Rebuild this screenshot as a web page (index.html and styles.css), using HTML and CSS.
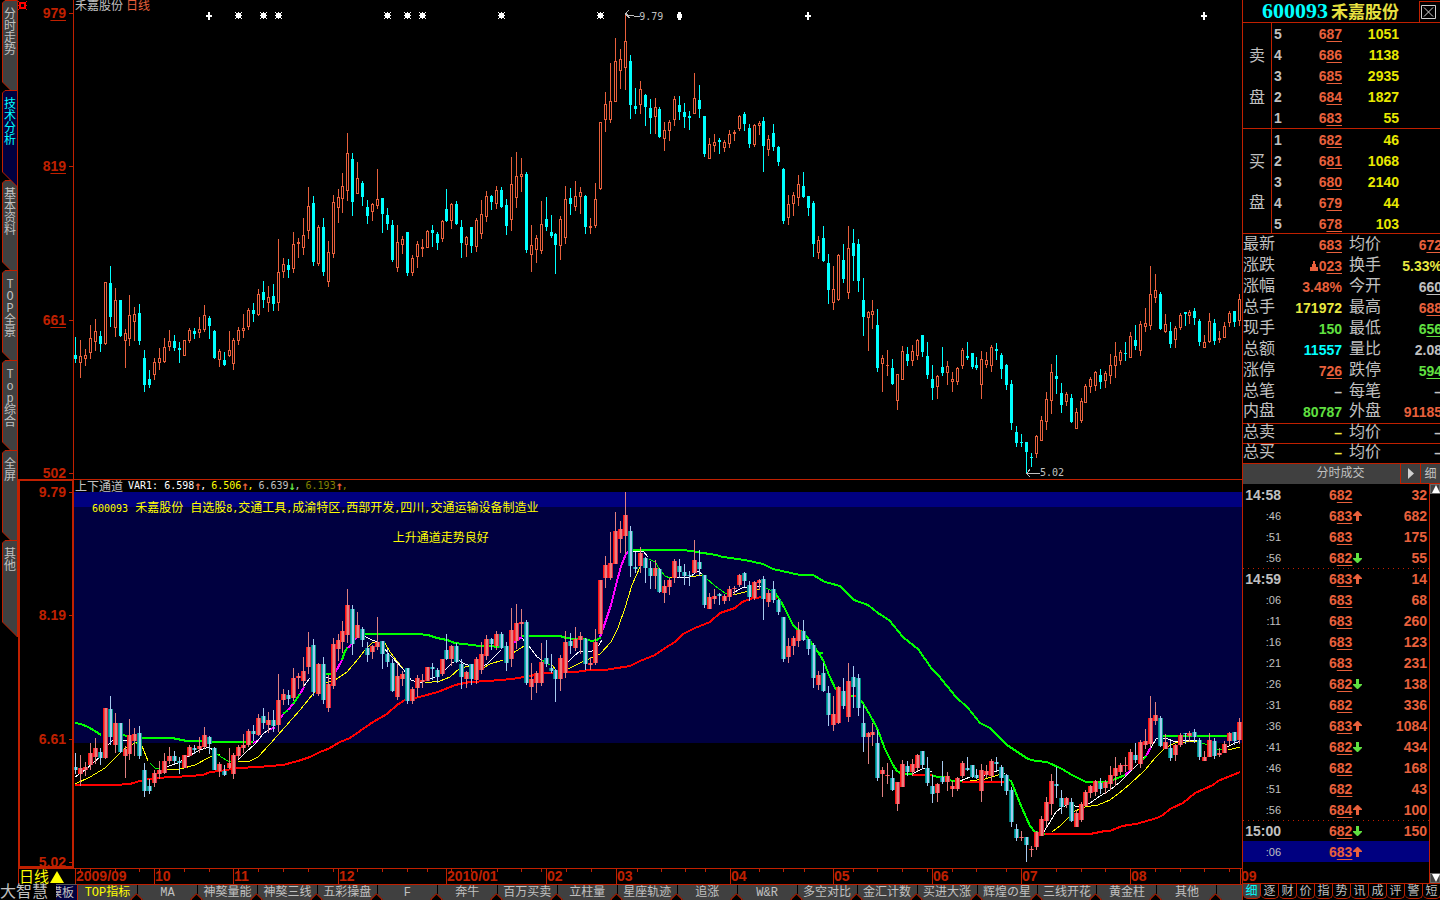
FILE: index.html
```html
<!DOCTYPE html>
<html lang="zh-CN">
<head>
<meta charset="utf-8">
<title>禾嘉股份 日线</title>
<link rel="stylesheet" href="styles.css">
</head>
<body>
<div class="app">
  <div class="left">
    <div class="work">
      <nav class="side">
        <button class="stab"><svg class="shape" viewBox="0 0 16 90"><path d="M15.500 .5H3L.5 3V82L9 90.500H15.500Z"/></svg><span>分时走势</span></button>
        <button class="stab active"><svg class="shape" viewBox="0 0 16 98"><path d="M15.500 .5H3L.5 3V82L15.500 97Z"/></svg><span>技术分析</span></button>
        <button class="stab"><svg class="shape" viewBox="0 0 16 90"><path d="M15.500 .5H3L.5 3V82L9 90.500H15.500Z"/></svg><span>基本资料</span></button>
        <button class="stab"><svg class="shape" viewBox="0 0 16 90"><path d="M15.500 .5H3L.5 3V82L9 90.500H15.500Z"/></svg><span>TOP全景</span></button>
        <button class="stab"><svg class="shape" viewBox="0 0 16 90"><path d="M15.500 .5H3L.5 3V82L9 90.500H15.500Z"/></svg><span>Top综合</span></button>
        <button class="stab"><svg class="shape" viewBox="0 0 16 90"><path d="M15.500 .5H3L.5 3V82L9 90.500H15.500Z"/></svg><span>全屏</span></button>
        <button class="stab last"><svg class="shape" viewBox="0 0 16 98"><path d="M15.500 .5H3L.5 3V82L15.500 97Z"/></svg><span>其他</span></button>
      </nav>
      <main class="charts">
        <section class="pane top">
          <div class="axis">
            <svg class="pin" viewBox="0 0 9 9"><path d="M1 1h7v7H1zM3 3v3h3V3z" fill-rule="evenodd"/><path d="M0 0h1v1H0zM8 0h1v1H8zM0 8h1v1H0zM8 8h1v1H8zM0 4h1v1H0zM8 4h1v1H8z"/></svg>
            <b>9<u>79</u></b><b>8<u>19</u></b><b>6<u>61</u></b><b>502</b>
          </div>
          <div class="plot">
            <svg id="price" viewBox="74 0 1168 479" preserveAspectRatio="none"></svg>
            <h1 class="title">禾嘉股份<span>日线</span></h1>
            <span class="note hi">9.79</span><span class="note lo">5.02</span>
          </div>
        </section>
        <section class="pane bottom">
          <div class="axis boxed"><b>9.79</b><b>8.19</b><b>6.61</b><b>5.02</b></div>
          <div class="stack">
            <div class="legend"><span class="cjk">上下通道</span><span class="w">VAR1: 6.598<i class="up">↑</i>,</span><span class="y">6.506<i class="up">↑</i>,</span><span>6.639<i class="dn">↓</i>,</span><span class="o">6.193<i class="up">↑</i>,</span></div>
            <div class="plot">
              <svg id="channel" viewBox="74 492 1168 376" preserveAspectRatio="none"></svg>
              <p class="msg one"><span><i>600093</i></span><span>禾嘉股份</span><span>自选股<i>8,</i>交通工具<i>,</i>成渝特区<i>,</i>西部开发<i>,</i>四川<i>,</i>交通运输设备制造业</span></p>
              <p class="msg two">上升通道走势良好</p>
            </div>
          </div>
        </section>
        <section class="dates">
          <button class="period">日线<svg viewBox="0 0 14 12"><path d="M7 0L14 12H0Z"/></svg></button>
          <div class="scale" id="scale"></div>
        </section>
      </main>
    </div>
    <nav class="foot">
      <span class="brand">大智慧</span><button class="tpl">模板</button>
      <div class="ftabs">
        <button class="on">TOP指标</button><button>MA</button><button>神獒量能</button><button>神獒三线</button><button>五彩操盘</button><button>F</button><button>奔牛</button><button>百万买卖</button><button>立柱量</button><button>星座轨迹</button><button>追涨</button><button>W&amp;R</button><button>多空对比</button><button>金汇计数</button><button>买进大涨</button><button>辉煌の星</button><button>三线开花</button><button>黄金柱</button><button>其他</button><span class="rest"></span>
      </div>
    </nav>
  </div>
  <aside class="quote">
    <header class="qhead"><span class="code">600093</span><span class="name">禾嘉股份</span>
      <button class="close" aria-label="关闭"><svg viewBox="0 0 15 14"><path d="M.5 .5H14.500V13.500H.5ZM3 2.500L12 11.500M12 2.500L3 11.500"/></svg></button></header>
    <section class="book"><div class="kind"><span>卖</span><span>盘</span></div>
      <table>
        <tr><th>5</th><td>6<u>87</u></td><td>1051</td></tr><tr><th>4</th><td>6<u>86</u></td><td>1138</td></tr><tr><th>3</th><td>6<u>85</u></td><td>2935</td></tr><tr><th>2</th><td>6<u>84</u></td><td>1827</td></tr><tr><th>1</th><td>6<u>83</u></td><td>55</td></tr>
      </table></section>
    <section class="book buy"><div class="kind"><span>买</span><span>盘</span></div>
      <table>
        <tr><th>1</th><td>6<u>82</u></td><td>46</td></tr><tr><th>2</th><td>6<u>81</u></td><td>1068</td></tr><tr><th>3</th><td>6<u>80</u></td><td>2140</td></tr><tr><th>4</th><td>6<u>79</u></td><td>44</td></tr><tr><th>5</th><td>6<u>78</u></td><td>103</td></tr>
      </table></section>
    <table class="info">
      <tr><th>最新</th><td class="r">6<u>83</u></td><th>均价</th><td class="r">6<u>72</u></td></tr>
      <tr><th>涨跌</th><td class="r"><svg class="tri" viewBox="0 0 8 10"><path d="M3 0H5V3H6V6H8V10H0V6H2V3H3Z"/></svg>0<u>23</u></td><th>换手</th><td class="y">5.33%</td></tr>
      <tr><th>涨幅</th><td class="r">3.48%</td><th>今开</th><td>6<u>60</u></td></tr>
      <tr><th>总手</th><td class="y">171972</td><th>最高</th><td class="r">6<u>88</u></td></tr>
      <tr><th>现手</th><td class="g">150</td><th>最低</th><td class="g">6<u>56</u></td></tr>
      <tr><th>总额</th><td class="c">11557</td><th>量比</th><td>2.08</td></tr>
      <tr><th>涨停</th><td class="r">7<u>26</u></td><th>跌停</th><td class="g">5<u>94</u></td></tr>
      <tr><th>总笔</th><td>–</td><th>每笔</th><td>–</td></tr>
      <tr><th>内盘</th><td class="g">80787</td><th>外盘</th><td class="r">91185</td></tr>
      <tr class="line"><th>总卖</th><td class="y">–</td><th>均价</th><td>–</td></tr>
      <tr class="line"><th>总买</th><td class="y">–</td><th>均价</th><td>–</td></tr>
    </table>
    <div class="thead"><h2>分时成交</h2><button aria-label="播放"><svg viewBox="0 0 6 11"><path d="M0 0L6 5.500L0 11Z"/></svg></button><button>细</button></div>
    <div class="trades">
      <table>
        <tr><th>14:58</th><td>6<u>82</u></td><td>32</td></tr>
        <tr><th class="s">:46</th><td>6<u>83</u><svg class="ar"><use href="#up"/></svg></td><td>682</td></tr>
        <tr><th class="s">:51</th><td>6<u>83</u></td><td>175</td></tr>
        <tr><th class="s">:56</th><td>6<u>82</u><svg class="ar"><use href="#dn"/></svg></td><td>55</td></tr>
        <tr class="dot"><th>14:59</th><td>6<u>83</u><svg class="ar"><use href="#up"/></svg></td><td>14</td></tr>
        <tr><th class="s">:06</th><td>6<u>83</u></td><td>68</td></tr>
        <tr><th class="s">:11</th><td>6<u>83</u></td><td>260</td></tr>
        <tr><th class="s">:16</th><td>6<u>83</u></td><td>123</td></tr>
        <tr><th class="s">:21</th><td>6<u>83</u></td><td>231</td></tr>
        <tr><th class="s">:26</th><td>6<u>82</u><svg class="ar"><use href="#dn"/></svg></td><td>138</td></tr>
        <tr><th class="s">:31</th><td>6<u>82</u></td><td>336</td></tr>
        <tr><th class="s">:36</th><td>6<u>83</u><svg class="ar"><use href="#up"/></svg></td><td>1084</td></tr>
        <tr><th class="s">:41</th><td>6<u>82</u><svg class="ar"><use href="#dn"/></svg></td><td>434</td></tr>
        <tr><th class="s">:46</th><td>6<u>82</u></td><td>168</td></tr>
        <tr><th class="s">:51</th><td>6<u>82</u></td><td>43</td></tr>
        <tr><th class="s">:56</th><td>6<u>84</u><svg class="ar"><use href="#up"/></svg></td><td>100</td></tr>
        <tr class="dot"><th>15:00</th><td>6<u>82</u><svg class="ar"><use href="#dn"/></svg></td><td>150</td></tr>
        <tr class="sel"><th class="s">:06</th><td>6<u>83</u><svg class="ar"><use href="#up"/></svg></td><td></td></tr>
      </table>
      <div class="bar"><button aria-label="向上"><svg viewBox="0 0 8 8"><path d="M4 0L8 8H0Z"/></svg></button><button aria-label="向下"><svg viewBox="0 0 8 8"><path d="M0 0H8L4 8Z"/></svg></button></div>
    </div>
    <nav class="qtabs"><button class="on">细</button><button>逐</button><button>财</button><button>价</button><button>指</button><button>势</button><button>讯</button><button>成</button><button>评</button><button>警</button><button>短</button></nav>
  </aside>
</div>
<svg class="defs"><symbol id="up" viewBox="0 0 9 10"><path fill="#e8603c" d="M4 0H5L9 4V5H6V10H3V5H0V4Z"/></symbol><symbol id="dn" viewBox="0 0 9 10"><path fill="#60e040" d="M3 0H6V5H9V6L5 10H4L0 6V5H3Z"/></symbol></svg>
<script src="chart.js"></script>
</body>
</html>
```
FILE: styles.css
```css
* { box-sizing: border-box; }
:root { --red: #c02000; --or: #e8603c; --gray: #c0c0c0; }
body { margin: 0; background: #000; color: var(--gray); font: 12px/12px "Liberation Sans", "Noto Sans CJK SC", sans-serif; overflow: hidden; }
button { font: inherit; color: inherit; background: none; border: 0; padding: 0; margin: 0; }
h1, h2, p { margin: 0; font: inherit; }
table { border-collapse: collapse; border-spacing: 0; }
i { font-style: normal; }
svg { display: block; }
u { text-decoration: underline 1px; text-underline-offset: 2px; text-decoration-skip-ink: none; }
.defs { position: absolute; width: 0; height: 0; }
.app { display: flex; height: 100vh; }
.left { flex: 1; min-width: 0; display: flex; flex-direction: column; }
.work { flex: 1; min-height: 0; display: flex; }

.side { width: 18px; padding-left: 2px; display: flex; flex-direction: column; position: relative; z-index: 2; }
.stab { position: relative; height: 90px; padding: 9px 2px 0; display: flex; align-items: flex-start; font-family: "Liberation Mono", "Noto Sans CJK SC", monospace; }
.stab span { position: relative; width: 12px; word-break: break-all; text-align: center; }
.stab .shape { position: absolute; left: 0; top: 0; width: 16px; height: 90px; overflow: visible; fill: #404040; stroke: var(--red); }
.stab.active, .stab.last { z-index: 1; }
.stab.active .shape, .stab.last .shape { height: 98px; }
.stab.active .shape { fill: #000040; }
.stab.active { color: #0ff; }

.charts { flex: 1; min-width: 0; display: flex; flex-direction: column; }
.pane { display: flex; min-height: 0; }
.pane.top { flex: 479 1 0; }
.pane.bottom { flex: 389 1 0; }
.axis { width: 55px; padding: 6px 7px 0 0; display: flex; flex-direction: column; justify-content: space-between; align-items: flex-end; color: var(--red); font-size: 14px; line-height: 14px; position: relative; }
.axis b { position: relative; height: 14px; }
.axis b:last-child { margin-bottom: -1px; }
.axis b::after { content: ""; position: absolute; right: -7px; top: 7px; width: 4px; height: 1px; background: var(--red); }
.axis.boxed { border: 2px solid var(--red); border-right-width: 1px; padding: 4px 6px 0 0; }
.axis.boxed b:last-child { margin-bottom: -3px; }
.pin { position: absolute; left: 0; top: 1px; width: 9px; height: 9px; fill: #f00; }
.plot { flex: 1; min-width: 0; min-height: 0; position: relative; }
.plot > svg { position: absolute; left: 0; top: 0; width: 100%; height: 100%; shape-rendering: crispEdges; }
.pane.top .plot { border-left: 1px solid var(--red); }
.title { position: absolute; left: 1px; top: 0; display: flex; gap: 3px; }
.title span { color: var(--or); }
.note { position: absolute; font: 10px/10px "DejaVu Sans Mono", monospace; }
.note.hi { left: 48.400%; top: 12px; }
.note.lo { left: 82.700%; bottom: 1px; }
.stack { flex: 1; min-width: 0; display: flex; flex-direction: column; border-top: 1px solid var(--red); border-left: 1px solid var(--red); }
.legend { height: 12px; padding-left: 1px; display: flex; gap: 5px; font: 10px/12px "DejaVu Sans Mono", monospace; white-space: pre; }
.legend .cjk { font: 12px/12px "Noto Sans CJK SC", sans-serif; }
.legend i { font: bold 12px/12px "DejaVu Sans Mono", monospace; display: inline-block; width: 6px; height: 12px; vertical-align: top; }
.w { color: #fff; } .legend .y { color: #ff0; } .o { color: #808000; }
.up { color: var(--or); } .dn { color: #60e040; }
.msg { position: absolute; color: #ff0; white-space: nowrap; }
.msg i { font: 10px/12px "DejaVu Sans Mono", monospace; }
.msg.one { left: 18px; top: 10px; display: flex; gap: 7px; }
.msg.two { left: 27.300%; top: 40px; }
.dates { height: 16px; display: flex; border-top: 1px solid var(--red); border-left: 1px solid var(--red); }
.period { width: 54px; display: flex; align-items: center; gap: 1px; color: #ff0; font-size: 15px; line-height: 15px; white-space: nowrap; }
.period svg { width: 14px; height: 12px; fill: #ff0; }
.scale { flex: 1; position: relative; z-index: 3; color: var(--red); font-size: 14px; line-height: 15px; font-weight: bold; }
.scale svg { position: absolute; width: 100%; height: 100%; shape-rendering: crispEdges; }
.scale span { position: absolute; top: 0; padding-left: 1px; }

.foot { height: 16px; display: flex; }
.brand { width: 56px; font-size: 16px; line-height: 15px; white-space: nowrap; }
.tpl { width: 21px; height: 16px; background: #000040; border-top: 1px solid #555; overflow: hidden; direction: rtl; white-space: nowrap; padding-right: 3px; line-height: 14px; }
.ftabs { flex: 1; min-width: 0; display: flex; background: #404040; border-top: 1px solid var(--red); overflow: hidden; }
.ftabs button { flex: 60 1 0; min-width: 0; position: relative; line-height: 14px; white-space: nowrap; border-left: 1px solid #000; font-family: "Liberation Mono", "Noto Sans CJK SC", monospace; }
.ftabs button::after { content: ""; position: absolute; right: -4px; bottom: -4px; width: 7px; height: 7px; background: #000; border: 1px solid var(--red); transform: rotate(45deg); z-index: 1; }
.ftabs .on { color: #ff0; border-left-color: var(--red); }
.rest { flex: 25 1 0; border-left: 1px solid #000; }

.quote { width: 198px; border-left: 1px solid var(--red); display: flex; flex-direction: column; overflow: hidden; font-size: 14px; }
.qhead { height: 23px; display: flex; align-items: center; padding-left: 19px; border-bottom: 1px solid var(--red); white-space: nowrap; }
.code { color: #0ff; font: bold 22px/22px "Liberation Serif", serif; margin-right: 3px; }
.name { color: #e8e040; font: bold 17px/22px "Noto Sans CJK SC", sans-serif; }
.close { margin-left: auto; width: 21px; height: 21px; border: 1px solid var(--red); border-right: 0; border-bottom: 0; display: grid; place-items: center start; padding-left: 1px; }
.close svg { width: 15px; height: 14px; fill: none; stroke: #d0d0d0; }
.book { display: flex; border-bottom: 1px solid var(--red); }
.book.buy { height: 105px; }
.kind { width: 29px; border-right: 1px solid var(--red); font-size: 16px; display: flex; flex-direction: column; align-items: center; justify-content: space-around; padding: 12px 0 9px; }
.book table { width: 127px; height: 105px; font-weight: bold; text-align: right; }
.book td, .book th { height: 21px; padding: 0; line-height: 14px; }
.book th { width: 12px; padding-left: 2px; text-align: left; }
.book td:nth-child(2) { width: 58px; color: var(--or); }
.book td:nth-child(3) { color: #e8e800; }
.info { width: 199px; table-layout: fixed; }
.info th { width: 34px; height: 21px; padding: 0 0 2px; font-weight: normal; font-size: 16px; line-height: 16px; text-align: left; white-space: nowrap; }
.info th:nth-child(3) { width: 43px; padding-left: 7px; }
.info td { padding: 0; text-align: right; font-weight: bold; line-height: 14px; white-space: nowrap; }
.info td:nth-child(2) { width: 65px; }
.info .line { border-top: 1px solid var(--red); }
.info .line th { height: 20px; }
.tri { display: inline-block; width: 8px; height: 10px; margin-right: 1px; fill: var(--or); vertical-align: baseline; }
.r { color: var(--or); } .info .y { color: #e8e840; } .g { color: #60e040; } .c { color: #0ff; }
.thead { height: 21px; display: flex; background: #404040; font-size: 12px; border-top: 1px solid var(--red); }
.thead h2 { flex: 1; text-align: center; line-height: 18px; padding-left: 38px; }
.thead button { width: 20px; border-left: 1px solid var(--red); border-bottom: 1px solid var(--red); display: grid; place-items: center; }
.thead svg { width: 6px; height: 11px; fill: #d0d0d0; }
.trades { flex: 1; min-height: 0; display: flex; }
.trades table { flex: 1; align-self: flex-start; table-layout: fixed; font-weight: bold; color: var(--or); text-align: right; }
.trades th, .trades td { padding: 0; height: 21px; line-height: 14px; }
.trades th { width: 38px; color: var(--gray); text-align: right; }
.trades th.s { font-weight: normal; font-size: 11px; }
.trades td:nth-child(2) { width: 82px; text-align: left; padding-left: 48px; white-space: nowrap; }
.trades td:nth-child(3) { padding-right: 2px; }
.ar { display: inline-block; width: 9px; height: 10px; margin-left: 1px; }
.dot { background: repeating-linear-gradient(90deg, var(--red) 0 1px, transparent 1px 5px) top / 100% 1px no-repeat; }
.sel { background: #000080; }
.bar { width: 11px; border-left: 1px solid var(--red); display: flex; flex-direction: column; justify-content: space-between; }
.bar button { height: 10px; background: #404040; border: 1px solid #666; padding: 0 1px; }
.bar svg { width: 8px; height: 8px; fill: #fff; }
.qtabs { height: 17px; display: flex; font-size: 12px; border-top: 1px solid var(--red); }
.qtabs button { width: 18px; flex: none; line-height: 14px; height: 15px; border: 1px solid var(--red); border-width: 0 1px 1px 0; border-radius: 0 0 5px 5px; }
.qtabs .on { color: #0ff; background: #404040; }
```
FILE: chart.js
```js
// One candle per entry: direction, then high, body top, body bottom and low on the price pane's scale.
const raw = `d337,355,359,363 u340,356,363,378 u349,355,359,366 u325,338,353,359 u319,331,342,351 d331,336,344,352 u282,282,344,345 d266,283,317,327 u288,300,328,337 d300,300,336,337
u329,333,341,368 u295,315,339,346 u307,314,322,341 d304,313,341,345 d350,358,385,392 d370,379,385,388 u358,362,375,380 u348,358,363,370 u338,347,362,363 u330,341,347,351
d335,341,348,351 d342,348,350,363 u340,340,356,356 u328,330,341,343 d328,331,334,339 u317,329,333,338 u305,315,330,332 d316,318,326,339 d330,331,358,359 u349,351,360,367
d352,360,365,366 u331,350,356,357 u338,340,364,370 u327,330,341,345 u314,328,331,338 u308,310,327,330 d303,310,314,322 u289,294,315,316 d281,292,300,308 u286,297,303,312
d284,296,304,311 u239,272,303,311 u258,264,272,278 d259,265,270,278 u232,244,269,273 u238,242,244,258 u218,235,248,255 u187,206,231,239 d196,203,262,266 u225,227,264,266
d218,227,272,276 u241,252,282,287 u195,202,254,258 u189,197,208,223 u173,186,199,213 u133,153,191,201 d153,159,202,216 u162,178,194,194 d181,183,197,206 d200,207,216,224
u203,204,212,221 u169,199,206,209 d198,198,214,233 d208,215,224,230 d220,225,260,262 u225,242,268,272 u236,239,245,254 d232,232,273,276 u255,258,273,276 u241,244,257,268
u239,247,249,257 u230,231,248,248 d225,230,233,247 d232,234,243,250 u220,221,239,242 d189,209,221,222 u203,204,221,229 d201,204,224,225 d220,227,243,258 u236,237,245,257
d227,227,246,253 u218,220,247,252 u200,214,234,239 u191,196,217,222 d195,196,202,210 u186,190,204,209 d187,190,207,208 d199,205,226,235 u157,184,220,231 u152,176,198,208
u158,174,177,192 d172,174,250,253 u225,245,255,272 u235,238,250,263 u201,224,251,254 d197,219,227,231 d215,232,236,238 d233,234,245,274 u216,219,246,260 u186,199,238,244
d188,198,204,215 u181,196,207,211 u187,192,197,214 d195,196,227,234 u218,226,228,234 u183,199,226,228 u122,122,189,190 u92,104,120,132 u63,101,120,123 u38,61,102,102
u49,59,71,89 u13,41,68,90 d55,61,105,119 d88,106,109,114 u81,89,105,114 d94,95,107,126 d99,108,118,134 u98,107,117,134 d107,109,137,138 u122,130,139,151
u120,122,131,141 u96,99,120,126 d96,105,112,120 d103,112,117,128 d111,116,118,130 u73,98,114,114 d85,100,109,118 d116,116,154,157 u138,144,159,159 u134,142,146,152
d138,140,142,154 u140,142,148,152 u130,134,144,148 u130,132,134,141 u115,116,129,131 d112,114,124,131 d124,128,144,148 u124,125,145,147 u121,123,126,135 d117,121,146,172
u135,139,150,156 d124,133,147,151 d146,147,162,166 d168,169,221,224 u195,204,218,225 u192,195,204,216 u175,184,198,206 d172,186,197,198 d196,196,208,216 d201,203,244,257
u236,240,253,259 d226,238,261,262 d254,263,290,304 u266,289,303,310 u254,255,300,301 d244,260,279,283 u226,248,293,299 d229,243,256,281 d239,244,281,292 d278,300,317,336
u311,312,318,351 u300,311,315,329 d309,325,368,372 u355,358,364,392 u350,365,366,376 d359,368,384,385 u374,374,401,410 u346,351,380,380 d347,354,361,366 u345,351,361,366
u339,340,356,360 d335,335,352,357 d342,356,375,379 d365,379,388,400 u375,376,387,399 d347,367,373,376 u361,366,373,385 u372,379,382,392 u367,368,382,385 u348,350,366,369
d342,356,358,360 d353,353,367,369 d357,365,368,370 u351,359,385,399 u352,360,365,368 u345,347,366,372 d343,349,351,360 d353,355,369,379 d364,365,385,390 d380,384,423,430
d426,432,443,447 d434,442,443,447 d442,442,452,473 d453,457,458,467 u435,436,454,458 u416,420,441,441 u392,399,422,430 u364,372,401,414 d355,376,379,394 d383,393,405,413
u392,394,402,406 d394,398,422,423 u408,412,429,429 u398,401,421,423 u384,386,403,403 u377,379,387,393 u371,372,386,391 d369,375,382,389 u371,373,381,388 u354,365,376,384
u342,356,366,378 u350,352,361,365 d342,353,354,361 u332,336,358,358 d325,340,346,350 u321,324,351,356 u308,323,327,332 u266,294,326,330 u274,290,298,303 d292,294,329,330
u314,324,332,333 d322,331,344,348 u326,328,340,348 u313,315,328,330 d312,312,314,326 u310,312,316,324 d308,311,318,325 d319,321,342,346 u335,342,348,348 u313,321,342,343
d319,323,341,345 u331,338,340,343 u322,326,338,338 u311,313,323,327 d311,311,322,327 u294,299,321,326`;

// Candles are five pixels apart, four at these indexes.
const narrow = new Set([11, 32, 54, 75, 97, 118, 139, 161, 182, 204, 225]);
let cx = 70;
const candles = raw.split(/\s+/).map((s, i) => {
  cx += narrow.has(i) ? 4 : 5;
  const [h, t, b, l] = s.slice(1).split(',').map(Number);
  return { up: s[0] === 'u', x: cx, h, t, b, l };
});
const rect = (x, y, w, h, c) => `<rect x="${x}" y="${y}" width="${w}" height="${h}" fill="${c}"/>`;

let out = '';
for (const { up, x, h, t, b, l } of candles) {
  const c = up ? '#e8603c' : '#0ff';
  const bh = Math.max(1, b - t);
  out += rect(x, h, 1, Math.max(1, l - h), c) + rect(x - 1, t, 3, bh, c);
  if (up && bh > 2) out += rect(x, t + 1, 1, bh - 2, '#000');
}
const cross = x => rect(x - 1, 12, 2, 8, '#fff') + rect(x - 3, 15, 6, 2, '#fff');
const star = x => rect(x - 2, 13, 5, 5, '#fff') + rect(x, 12, 1, 7, '#fff') + rect(x - 3, 15, 7, 1, '#fff') +
  [[-3, 12], [3, 12], [-3, 18], [3, 18]].map(([d, y]) => rect(x + d, y, 1, 1, '#fff')).join('');
out += [209, 808, 1204].map(cross).join('') + [238, 263, 278, 387, 407, 422, 501, 600].map(star).join('');
out += rect(678, 12, 3, 8, '#fff') + rect(677, 14, 5, 4, '#fff');
out += '<path d="M625.500 14.500L640 17M629 10L625.500 14L629.500 18M1026.500 473.500H1040M1030 469.500L1026.500 473.500L1030 477" fill="none" stroke="#c0c0c0"/>';
document.getElementById('price').innerHTML = out;

const lines = [
  ['#f00', 2, '75,785 115,785 130,784 140,781 154,778 175,777 203,775 210,772 220,771 238,768 258,767 270,766 283,765 298,761 310,757 320,752 328,749 340,742 350,738 360,731 373,722 387,714 397,705 405,700 419,697 438,692 455,685 470,682 488,681 512,679 530,676 545,673 575,672 590,670 605,670 630,666 640,661 655,655 665,648 675,642 683,634 695,628 710,622 720,613 735,608 742,602 753,598 765,597 777,598|853,696 857,696|912,775 932,775|962,782 1005,782|1045,834 1090,834 1105,831 1110,831 1122,826 1136,824 1157,818 1163,815 1170,809 1183,803 1195,793 1213,785 1218,781 1240,772'],
  ['#0f0', 2, '75,723 81,724 88,727 95,731 101,735|122,735 128,736 134,737 142,738 172,738 187,741 202,741 213,742 253,742|283,714 288,710|293,704 300,694|325,674 333,674|342,660 345,651 348,647|364,634 417,634 428,635 437,638 447,640 455,643 480,646 508,647 513,644|522,636 560,636 566,638 575,639 586,639 591,641 597,640 601,637|633,550 684,550 697,552 716,555 723,557 745,560 763,564 773,569 800,575 813,575 825,582 840,586 854,600 868,605 878,613 889,620 903,637 909,642 918,649 932,669 938,675 956,697 968,708 980,723 990,728 1007,745 1016,751 1028,759 1036,761 1047,762 1062,769 1072,775 1086,782 1108,782 1125,775|1142,760 1146,756|1162,736 1228,736'],
  ['#0f0', 2, '775,593 780,600 785,609 793,625 797,629 803,632 810,641 816,649 823,660 829,675 836,690|818,653 823,653|850,696 853,696|861,700 870,715 877,728 885,749 893,765 897,771 902,774 912,774|932,775 937,777 945,777 952,781 962,781|1005,778 1011,781 1022,808 1030,826 1035,832 1045,834'],
  ['#f0f', 2, '253,743 259,740|269,729 275,728|280,719 283,714|288,710 293,704|300,694 304,687|335,673 342,660|348,648 357,637|513,643 522,637|600,637 603,629 611,605 616,585 621,566 626,554 628,552|1125,775 1131,770|1146,756 1151,747'],
  ['#ff0', 1, '75,784 90,777 105,768 115,758 122,751 130,745 138,742 142,746 148,761|165,769 180,769 195,765 210,757 220,754|238,761 250,761 258,757 270,744 285,727 300,710 313,694 325,683 335,680 347,672 358,659 365,650 373,642 385,643 390,652 404,670|425,683 440,681 450,677 460,668 470,666 483,668 490,664 503,660|513,653 524,646|552,665 556,670|568,669 580,663 600,654 611,642 618,628 625,608 632,585 640,567|670,578 690,577 702,575|733,595 745,592 760,589|970,781 985,779 1005,773|1052,832 1060,826 1068,818 1075,811 1085,807 1098,805 1110,800 1118,794 1130,784 1145,770 1155,758 1165,748 1175,743 1185,742 1197,741|1228,750 1240,747'],
  ['#fff', 1, '75,777 85,770 93,763 100,757 108,745 115,738 122,740 127,741|166,767 178,763 187,757 200,750 209,747 216,753|238,760 246,752 255,744 263,734 271,728|304,686 310,678|326,677 331,679 335,675|364,636 372,640 378,642 390,655 404,670 411,680 420,683 428,680 437,676 445,670 452,663 458,660 463,663 470,666 480,668 487,664 495,656 501,650|522,638 528,645 532,650 537,657 542,660|568,662 573,657 580,651 590,652 597,648 602,640|633,551 643,551 648,557|676,577 690,577 698,571 702,574|733,593 742,588 752,586 763,587|912,774 924,768 932,772|960,781 970,777 985,775 1000,770 1005,774|1043,833 1050,822 1056,812 1062,807 1070,804 1075,806 1082,807 1090,803 1100,796 1110,790 1120,782 1132,770 1138,764 1144,757|1151,748 1156,739 1160,738 1166,738 1175,742 1190,740 1197,740|1225,748 1233,744 1240,741'],
  ['#0f0', 1, '135,742 141,748|150,763 155,768 160,768|216,753 221,757 228,761 235,761|542,660 550,665|649,559 655,562 660,570 665,576 670,578|702,574 706,578 715,586 725,593 730,594|763,587 770,590 776,594|1197,741 1205,744 1212,748 1222,750'],
];
let low = rect(73, 492, 1169, 15, '#000080') + rect(73, 507, 1169, 236, '#000040');
for (const [c, w, pts] of lines)
  for (const p of pts.split('|')) low += `<polyline points="${p}" fill="none" stroke="${c}" stroke-width="${w}"/>`;
const map = y => Math.round(492 + (y - 13) * 370 / 460);
for (const { up, x, h, t, b, l } of candles) {
  const red = up || b - t < 2;
  const y = map(t), bh = Math.max(1, map(b) - y);
  low += rect(x, map(h), 1, Math.max(1, map(l) - map(h)), red ? '#e08080' : '#a6caf0');
  low += rect(x - 2, y, 5, bh, red ? '#ff1010' : '#008080') + rect(x - 1, y, 3, bh, red ? '#e88080' : '#a6caf0');
  low += rect(x - 1, y, 1, bh, red ? '#f04848' : '#10b0b8') + rect(x + 2, y, 1, bh, red ? '#e02040' : '#009080');
}
document.getElementById('channel').innerHTML = low;

const months = [[75, '2009/09'], [154, '10'], [233, '11'], [338, '12'], [446, '2010/01'], [546, '02'], [616, '03'], [730, '04'], [833, '05'], [932, '06'], [1021, '07'], [1130, '08'], [1240, '09']];
const weeks = [80, 90, 115, 139, 159, 184, 209, 238, 258, 283, 308, 333, 357, 382, 407, 427, 451, 471, 497, 521, 541, 566, 591, 637, 661, 685, 705, 759, 783, 804, 853, 877, 902, 927, 952, 976, 1006, 1056, 1081, 1105, 1155, 1180, 1204, 1229];
document.getElementById('scale').innerHTML =
  '<svg viewBox="73 0 1169 15" preserveAspectRatio="none">' + months.map(([x]) => rect(x, 0, 1, 15, '#c02000')).join('') + weeks.map(x => rect(x, 0, 1, 3, '#c02000')).join('') + '</svg>' +
  months.map(([x, t]) => `<span style="left:${(x - 73) / 11.690}%">${t}</span>`).join('');
```
